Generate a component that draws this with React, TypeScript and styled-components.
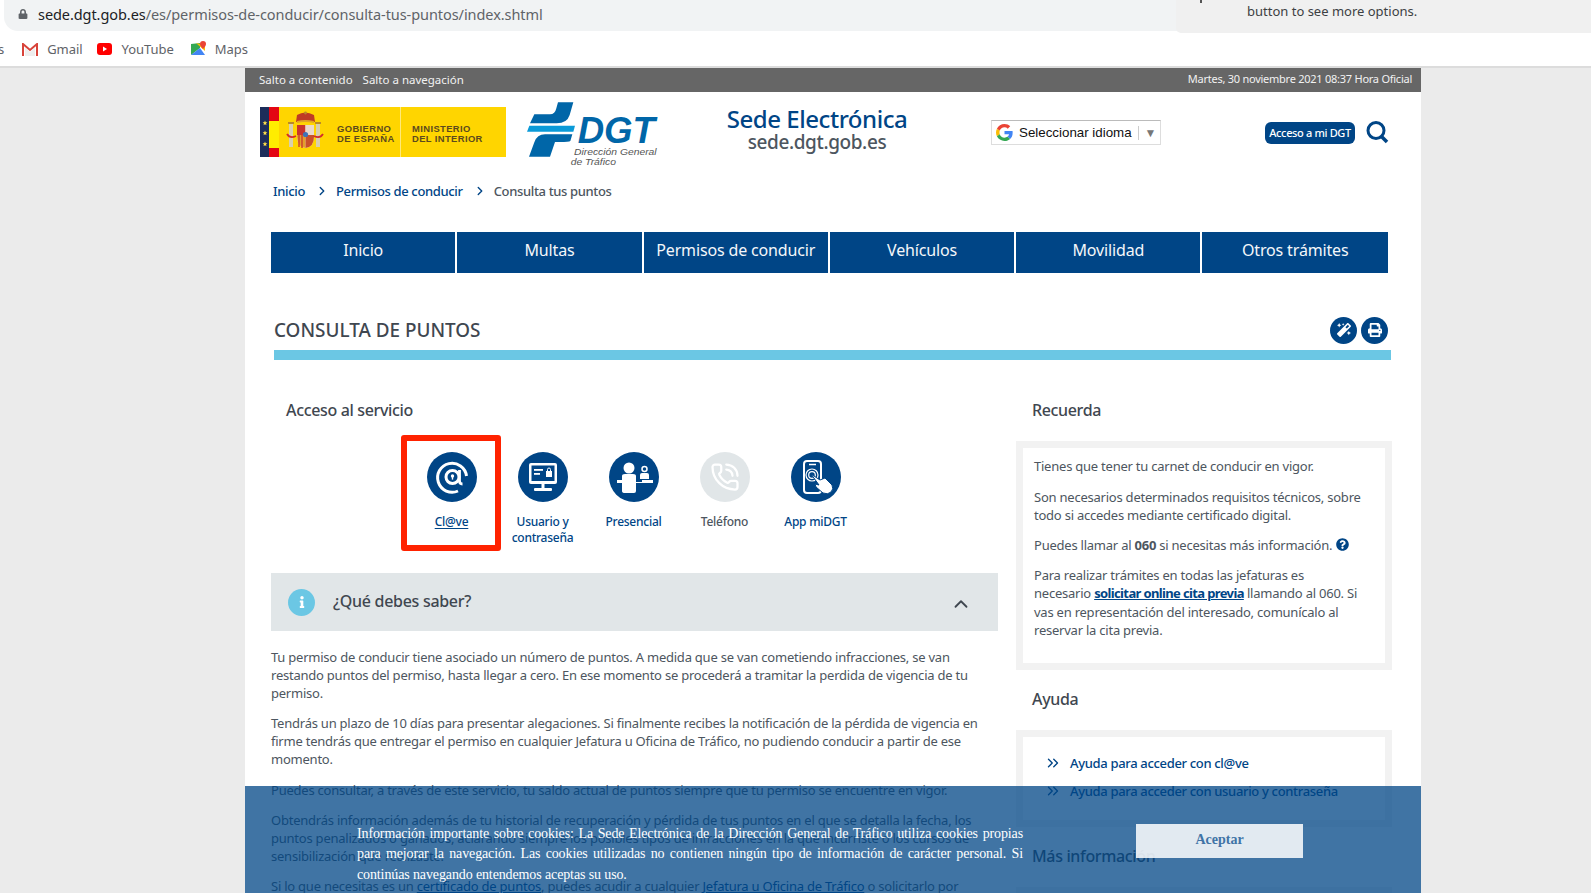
import React, { FC } from "react";
import styled, { createGlobalStyle } from "styled-components";
import { ChevronRight, ChevronsRight, ChevronUp, PhoneCall } from "lucide-react";
import { FaLock, FaMagic, FaPrint, FaQuestionCircle, FaInfo } from "react-icons/fa";

const BLUE = "#004586";
const SKY = "#6bc7e4";
const TEXT = "#4d5660";

const GlobalStyle = createGlobalStyle`
  html, body {
    margin: 0;
    height: 893px;
    overflow: hidden;
    background: #ebebeb;
    font-family: "Noto Sans", "Open Sans", sans-serif;
  }
`;

const Browser = styled.div`
  position: relative;
  background: #fff;
  height: 68px;
  box-shadow: inset 0 -2px 0 #dcdcdc;
`;

const AddressBar = styled.div`
  height: 31px;
  margin-left: 4px;
  background: #f1f3f4;
  border-bottom-left-radius: 14px;
  display: flex;
  align-items: center;
  padding: 0 0 3px 14px;
  box-sizing: border-box;
  font-size: 14.5px;
  letter-spacing: -0.07px;
  color: #5f6368;
  svg {
    color: #5f6368;
    font-size: 10px;
    margin-right: 10px;
  }
  b {
    font-weight: 400;
    color: #202124;
  }
`;

const Popup = styled.div`
  position: absolute;
  left: 1176px;
  right: 0;
  top: 0;
  height: 33px;
  background: #f0f0f0;
  border-bottom-left-radius: 5px;
  font-size: 13px;
  color: #3c4043;
  padding: 2px 0 0 71px;
  box-sizing: border-box;
  &::before {
    content: "";
    position: absolute;
    left: 24px;
    top: 0;
    width: 2px;
    height: 3px;
    background: #555;
  }
`;

const Bookmarks = styled.div`
  display: flex;
  align-items: center;
  height: 35px;
  font-size: 13px;
  letter-spacing: -0.05px;
  color: #5f6368;
  padding-top: 1px;
  box-sizing: border-box;
`;

const Bookmark = styled.span<{ $left: number; $gap: number }>`
  display: flex;
  align-items: center;
  gap: ${({ $gap }) => $gap}px;
  margin-left: ${({ $left }) => $left}px;
`;

const Frame = styled.div`
  padding-left: 245px;
`;

const Page = styled.div`
  position: relative;
  width: 1176px;
  height: 825px;
  overflow: hidden;
  background: #fff;
  color: ${TEXT};
`;

const TopBar = styled.div`
  height: 24px;
  background: #666;
  color: #f2f2f2;
  font-size: 11px;
  letter-spacing: -0.25px;
  display: flex;
  align-items: center;
  justify-content: space-between;
  padding: 0 9px 3px 14px;
  box-sizing: border-box;
`;

const SkipLinks = styled.div`
  display: flex;
  gap: 10px;
  font-size: 11.5px;
  letter-spacing: 0;
  padding-top: 1px;
`;

const Masthead = styled.div`
  height: 89px;
  display: flex;
  align-items: flex-start;
  padding-left: 15px;
`;

const GovLogo = styled.svg`
  margin-top: 15px;
  flex: none;
`;

const DgtLogo = styled.svg`
  margin: 8px 0 0 19px;
  flex: none;
`;

const SiteTitle = styled.div`
  width: 200px;
  margin: 13px 0 0 52px;
  text-align: center;
`;

const SiteName = styled.div`
  font-size: 24px;
  line-height: 28px;
  letter-spacing: -0.45px;
  color: ${BLUE};
  font-weight: 500;
`;

const SiteHost = styled.div`
  font-size: 19px;
  line-height: 19px;
  letter-spacing: -0.4px;
  font-weight: 500;
`;

const Translator = styled.div`
  width: 170px;
  height: 25px;
  margin: 28px 0 0 74px;
  box-sizing: border-box;
  border: 1px solid #ddd;
  border-top-color: #bbb;
  display: flex;
  align-items: center;
  gap: 6px;
  padding-left: 4px;
  font: 13.33px "Liberation Sans", Arial, sans-serif;
  color: #111;
`;

const TranslatorArrow = styled.span`
  border-left: 1px solid #ccc;
  padding-left: 6px;
  color: #777;
  font-size: 12px;
  line-height: 14px;
`;

const AccessButton = styled.a`
  width: 90px;
  height: 22px;
  margin: 30px 0 0 104px;
  padding-bottom: 1px;
  box-sizing: border-box;
  background: ${BLUE};
  border-radius: 6px;
  color: #fff;
  font-size: 11px;
  font-weight: 500;
  letter-spacing: -0.35px;
  display: flex;
  align-items: center;
  justify-content: center;
`;

const SearchIcon = styled.svg`
  margin: 28px 0 0 10px;
`;

const Breadcrumb = styled.nav`
  display: flex;
  align-items: center;
  height: 20px;
  padding-left: 28px;
  font-size: 13px;
  font-weight: 500;
  letter-spacing: -0.35px;
  svg {
    color: ${BLUE};
    margin: 0 7px 0 10px;
  }
`;

const CrumbLink = styled.a`
  color: ${BLUE};
`;

const MainNav = styled.nav`
  display: flex;
  gap: 2px;
  margin: 31px 0 0 26px;
  width: 1117px;
  height: 41px;
`;

const NavItem = styled.a`
  flex: 0 0 184.3px;
  background: ${BLUE};
  color: #f4f7fa;
  font-size: 16px;
  letter-spacing: -0.15px;
  text-align: center;
  line-height: 36px;
  &:last-child {
    flex: 1;
  }
`;

const TitleRow = styled.div`
  display: flex;
  align-items: center;
  justify-content: space-between;
  margin: 40px 0 3px 29px;
  width: 1117px;
  height: 34px;
  padding-right: 3px;
  box-sizing: border-box;
`;

const PageTitle = styled.h1`
  margin: 0 0 1px;
  font-size: 18.9px;
  font-weight: 500;
  color: #3f4750;
`;

const Tools = styled.div`
  display: flex;
  gap: 4px;
`;

const ToolButton = styled.span`
  width: 27px;
  height: 27px;
  border-radius: 50%;
  background: ${BLUE};
  color: #fff;
  font-size: 14px;
  display: flex;
  align-items: center;
  justify-content: center;
`;

const TitleRule = styled.div`
  height: 10px;
  width: 1117px;
  margin-left: 29px;
  background: ${SKY};
`;

const Columns = styled.div`
  display: grid;
  grid-template-columns: 727px 376px;
  column-gap: 18px;
  padding-left: 26px;
`;

const LeftColumn = styled.main``;
const RightColumn = styled.aside``;

const SectionTitle = styled.h2<{ $top: number; $left?: number }>`
  margin: ${({ $top }) => $top}px 0 0 ${({ $left = 16 }) => $left}px;
  font-size: 16px;
  line-height: 20px;
  font-weight: 500;
  letter-spacing: -0.35px;
  color: #3f4750;
`;

const Services = styled.div`
  position: relative;
  display: flex;
  margin-top: 32px;
  padding-left: 135px;
`;

const Service = styled.a<{ $muted?: boolean }>`
  width: 91px;
  display: flex;
  flex-direction: column;
  align-items: center;
  text-align: center;
  font-size: 12px;
  line-height: 16px;
  font-weight: 500;
  letter-spacing: -0.25px;
  color: ${({ $muted }) => ($muted ? TEXT : BLUE)};
  u {
    text-underline-offset: 2px;
  }
`;

const ServiceIcon = styled.span<{ $muted?: boolean }>`
  width: 50px;
  height: 50px;
  border-radius: 50%;
  background: ${({ $muted }) => ($muted ? "#e1e6e8" : BLUE)};
  color: #fff;
  margin-bottom: 12px;
  display: flex;
  align-items: center;
  justify-content: center;
`;

const Highlight = styled.div`
  position: absolute;
  left: 130px;
  top: -17px;
  width: 100px;
  height: 116px;
  box-sizing: border-box;
  border: 6px solid #ff2200;
  border-radius: 3px;
`;

const Accordion = styled.div`
  height: 58px;
  margin-top: 27px;
  background: #e1e6e8;
  display: flex;
  align-items: center;
  padding: 0 26px 0 17px;
  font-size: 16px;
  font-weight: 500;
  letter-spacing: -0.3px;
  color: #3f4750;
`;

const InfoBadge = styled.span`
  width: 27px;
  height: 27px;
  border-radius: 50%;
  background: ${SKY};
  color: #fff;
  font-size: 12px;
  margin-right: 18px;
  display: flex;
  align-items: center;
  justify-content: center;
`;

const AccordionLabel = styled.span`
  flex: 1;
  padding-bottom: 2px;
`;

const AccordionChevron = styled(ChevronUp)`
  margin-top: 3px;
`;

const Copy = styled.div`
  margin-top: 17px;
  font-size: 13px;
  line-height: 18.1px;
  letter-spacing: -0.23px;
  p {
    margin: 0 0 12px;
  }
  a {
    color: ${BLUE};
    text-decoration: underline;
  }
`;

const SideBox = styled.div`
  margin-top: 21px;
  border: 7px solid #f2f2f2;
`;

const SideCopy = styled.div`
  padding: 9.3px 22px 11.7px 11px;
  font-size: 13px;
  line-height: 18.2px;
  letter-spacing: -0.23px;
  p {
    margin: 0 0 12px;
  }
  b {
    font-weight: 700;
  }
  a {
    color: ${BLUE};
    font-weight: 700;
    letter-spacing: -0.63px;
    text-decoration: underline;
  }
  svg {
    color: ${BLUE};
    margin-left: 4px;
    vertical-align: -1px;
  }
`;

const HelpList = styled.div`
  padding: 12px 0 15px 21px;
`;

const HelpLink = styled.a`
  display: flex;
  align-items: center;
  height: 28px;
  gap: 8px;
  color: ${BLUE};
  font-size: 13px;
  font-weight: 500;
  letter-spacing: -0.33px;
`;

const CookieBanner = styled.div`
  position: absolute;
  left: 0;
  right: 0;
  top: 718px;
  height: 107px;
  background: rgba(0, 69, 134, 0.75);
  font-family: "Liberation Serif", "Times New Roman", serif;
  color: #fff;
`;

const CookieText = styled.p`
  position: absolute;
  left: 112px;
  top: 37.8px;
  width: 666px;
  margin: 0;
  font-size: 14px;
  letter-spacing: -0.12px;
  line-height: 20.5px;
  text-align: justify;
`;

const CookieButton = styled.button`
  position: absolute;
  left: 891px;
  top: 38px;
  width: 167px;
  height: 34px;
  border: 0;
  padding: 0 0 2px;
  background: rgba(255, 255, 255, 0.85);
  color: #4073a6;
  font: bold 14px "Liberation Serif", "Times New Roman", serif;
`;

const Star: FC<{ y: number }> = ({ y }) => (
  <path
    transform={`translate(5 ${y})`}
    d="M0-2.400.7-.7 2.400-.7 1 .4 1.500 2.200 0 1.200-1.500 2.200-1 .4-2.400-.7-.7-.7z"
    fill="#ffe14a"
  />
);

const GovernmentLogo: FC = () => (
  <GovLogo width="246" height="50" viewBox="0 0 246 50">
    <rect width="246" height="50" fill="#ffd500" />
    <rect width="9" height="50" fill="#1c2d5a" />
    <rect x="9" width="10" height="14" fill="#e30613" />
    <rect x="9" y="41" width="10" height="9" fill="#e30613" />
    <rect x="9" y="14" width="10" height="27" fill="#ffed00" />
    <Star y={16} />
    <Star y={26} />
    <Star y={37} />
    <rect x="140" width="1" height="50" fill="#ffe97a" />
    {/* escudo */}
    <rect x="29" y="17" width="4" height="23" fill="#d8cfae" />
    <rect x="56" y="17" width="4" height="23" fill="#d8cfae" />
    <rect x="28" y="15" width="6" height="2" fill="#b98a2a" />
    <rect x="55" y="15" width="6" height="2" fill="#b98a2a" />
    <path d="M37 8q8-5 17 0l1 7q-9-2-19 0z" fill="#bf3b25" />
    <path d="M37 14q8-2 17 0v2q-9-2-17 0z" fill="#e0a526" />
    <circle cx="45.500" cy="6" r="1.400" fill="#b98a2a" />
    <path d="M37 18h17v12q0 10-8.500 11Q37 40 37 30z" fill="#fff2d0" />
    <rect x="37" y="18" width="8.500" height="10" fill="#c8352b" />
    <rect x="45.500" y="18" width="8.500" height="10" fill="#ead9cb" />
    <path d="M37 28h8.500v13Q37 40 37 30z" fill="#e2a02a" />
    <path d="M39 28v12M42 28v13" stroke="#c8352b" strokeWidth="1.300" />
    <path d="M45.500 28H54v2q0 10-8.500 11z" fill="#c8502b" />
    <circle cx="45.500" cy="27.500" r="2.600" fill="#3f73b5" />
    <path d="M27 27q3 5 9 2M63 27q-3 5-9 2" stroke="#d22c2c" strokeWidth="1.800" fill="none" />
    <g fontFamily="'Liberation Sans', sans-serif" fontWeight="700" fontSize="9.400" fill="#5c4a1e" letterSpacing=".4">
      <text x="77" y="25">GOBIERNO</text>
      <text x="77" y="35">DE ESPAÑA</text>
      <text x="152" y="25">MINISTERIO</text>
      <text x="152" y="35">DEL INTERIOR</text>
    </g>
  </GovLogo>
);

const TrafficLogo: FC = () => (
  <DgtLogo width="140" height="70" viewBox="810 15 420 210">
    <path d="M838 58H885Q900 58 904 40L909 22H955L944 60Q936 85 905 85H825z" fill="#0066a8" />
    <path d="M823 92H960L955 110H816z" fill="#0a9ad8" />
    <path d="M870 118H952L946 138Q942 141 915 141H900L885 185H822L838 142Q846 118 870 118z" fill="#0066a8" />
    <text x="968" y="143" fontFamily="'Liberation Sans', sans-serif" fontWeight="700" fontStyle="italic" fontSize="112" textLength="232" lengthAdjust="spacingAndGlyphs" fill="#0066a8">DGT</text>
    <g fontFamily="'Liberation Sans', sans-serif" fontStyle="italic" fontSize="28" fill="#555">
      <text x="957" y="179" textLength="248" lengthAdjust="spacingAndGlyphs">Dirección General</text>
      <text x="947" y="211" textLength="136" lengthAdjust="spacingAndGlyphs">de Tráfico</text>
    </g>
  </DgtLogo>
);

const GoogleMark: FC = () => (
  <svg width="17" height="17" viewBox="0 0 48 48">
    <path fill="#ea4335" d="M24 9.500c3.500 0 6.700 1.200 9.200 3.600l6.900-6.900C35.900 2.400 30.500 0 24 0 14.600 0 6.500 5.400 2.600 13.200l8 6.200C12.400 13.700 17.700 9.500 24 9.500z" />
    <path fill="#4285f4" d="M47 24.500c0-1.600-.1-3.100-.4-4.500H24v9h12.900c-.6 3-2.200 5.500-4.800 7.200l7.700 6C44.400 38.500 47 32.100 47 24.500z" />
    <path fill="#fbbc05" d="M10.600 28.600C10.100 27.200 9.800 25.600 9.800 24s.3-3.200.8-4.600l-8-6.200C1 16.400 0 20.100 0 24s1 7.600 2.600 10.800z" />
    <path fill="#34a853" d="M24 48c6.500 0 11.900-2.100 15.900-5.800l-7.700-6c-2.200 1.400-4.900 2.300-8.200 2.300-6.300 0-11.600-4.200-13.400-9.900l-8 6.200C6.500 42.600 14.600 48 24 48z" />
  </svg>
);

const ClaveIcon: FC = () => (
  <svg width="50" height="50" viewBox="0 0 50 50" fill="none" stroke="currentColor">
    <path d="M31 39A14.500 14.500 0 1 1 39.500 24" strokeWidth="3" />
    <circle cx="25.500" cy="25" r="6.500" strokeWidth="3" />
    <path d="M32.500 18V29q0 3 3 3" strokeWidth="2.800" />
    <circle cx="25.500" cy="24" r="1.700" fill="currentColor" stroke="none" />
    <rect x="24.800" y="24" width="1.400" height="3.600" fill="currentColor" stroke="none" />
  </svg>
);

const DesktopIcon: FC = () => (
  <svg width="50" height="50" viewBox="0 0 50 50">
    <rect x="11" y="11" width="28" height="21" rx="2" fill="currentColor" />
    <rect x="13.500" y="13.500" width="23" height="15.500" fill={BLUE} />
    <rect x="16" y="17" width="9" height="1.800" fill="currentColor" />
    <rect x="16" y="21" width="6" height="1.800" fill="currentColor" />
    <rect x="28" y="19" width="6" height="6" fill="currentColor" />
    <path d="M29.500 19v-1.500a1.500 1.500 0 0 1 3 0V19" stroke="currentColor" fill="none" />
    <rect x="23.500" y="32" width="3" height="4" fill="currentColor" />
    <rect x="16" y="36" width="18" height="3" rx="1" fill="currentColor" />
  </svg>
);

const DeskIcon: FC = () => (
  <svg width="50" height="50" viewBox="0 0 50 50" fill="currentColor">
    <circle cx="20" cy="16" r="5.500" />
    <path d="M13 24q0-2 3-2h8q3 0 3 2v6h6v-2h11v3H27v8q0 2-2 2h-9q-3 0-3-2v-8H8v-3h5z" />
    <circle cx="35.500" cy="17" r="2.500" fill="none" stroke="currentColor" strokeWidth="1.500" />
    <path d="M31 27v-4q0-2 2-2h5q2 0 2 2v4z" />
  </svg>
);

const AppIcon: FC = () => (
  <svg width="50" height="50" viewBox="0 0 50 50" fill="none" stroke="currentColor">
    <rect x="13" y="9" width="17" height="32" rx="3" strokeWidth="2" />
    <path d="M18 12.500h7" strokeWidth="1.500" />
    <circle cx="21" cy="23" r="6" strokeWidth="1.200" />
    <circle cx="21" cy="23" r="3.300" strokeWidth="1.200" />
    <path d="M20 22l9 6 5-2 7 7q2 4-1 7-3 3-8 1l-7-6-1-3 4 1z" fill="currentColor" stroke={BLUE} strokeWidth="1" />
  </svg>
);

const services = [
  { label: "Usuario y contraseña", icon: <DesktopIcon /> },
  { label: "Presencial", icon: <DeskIcon /> },
  { label: "Teléfono", icon: <PhoneCall size={30} strokeWidth={1.800} />, muted: true },
  { label: "App miDGT", icon: <AppIcon /> },
];

const sections = ["Inicio", "Multas", "Permisos de conducir", "Vehículos", "Movilidad", "Otros trámites"];

export default function App() {
  return (
    <>
      <GlobalStyle />
      <Browser>
        <AddressBar>
          <FaLock />
          <span>
            <b>sede.dgt.gob.es</b>/es/permisos-de-conducir/consulta-tus-puntos/index.shtml
          </span>
        </AddressBar>
        <Popup>button to see more options.</Popup>
        <Bookmarks>
          <Bookmark $left={-2} $gap={0}>s</Bookmark>
          <Bookmark $left={18} $gap={9}>
            <svg width="16" height="13" viewBox="0 0 16 13">
              <path d="M1 13V1l7 6 7-6v12" fill="none" stroke="#d8433a" strokeWidth="2" />
              <path d="M3 13V5l5 4 5-4v8" fill="#eee" />
            </svg>
            Gmail
          </Bookmark>
          <Bookmark $left={14} $gap={10}>
            <svg width="15" height="12" viewBox="0 0 15 12">
              <rect width="15" height="12" rx="3" fill="#f00" />
              <path d="M6 3.500v5l4-2.500z" fill="#fff" />
            </svg>
            YouTube
          </Bookmark>
          <Bookmark $left={17} $gap={8}>
            <svg width="16" height="16" viewBox="0 0 16 16">
              <path d="M0 3l9-1v5L0 14z" fill="#34a853" />
              <path d="M0 14l9-7 5 7z" fill="#4285f4" />
              <path d="M5 2l9 8V4z" fill="#fbbc05" />
              <path d="M12 0a3 3 0 0 1 3 3c0 2-3 5-3 5s-3-3-3-5a3 3 0 0 1 3-3z" fill="#ea4335" />
            </svg>
            Maps
          </Bookmark>
        </Bookmarks>
      </Browser>
      <Frame>
        <Page>
          <TopBar>
            <SkipLinks>
              <span>Salto a contenido</span>
              <span>Salto a navegación</span>
            </SkipLinks>
            <span>Martes, 30 noviembre 2021 08:37 Hora Oficial</span>
          </TopBar>
          <Masthead>
            <GovernmentLogo />
            <TrafficLogo />
            <SiteTitle>
              <SiteName>Sede Electrónica</SiteName>
              <SiteHost>sede.dgt.gob.es</SiteHost>
            </SiteTitle>
            <Translator>
              <GoogleMark />
              Seleccionar idioma
              <TranslatorArrow>▼</TranslatorArrow>
            </Translator>
            <AccessButton>Acceso a mi DGT</AccessButton>
            <SearchIcon width="24" height="24" viewBox="0 0 24 24" fill="none" stroke={BLUE}>
              <circle cx="11" cy="10.500" r="8" strokeWidth="3" />
              <path d="M16 16l6 6" strokeWidth="3.500" />
            </SearchIcon>
          </Masthead>
          <Breadcrumb>
            <CrumbLink>Inicio</CrumbLink>
            <ChevronRight size={14} strokeWidth={2.400} />
            <CrumbLink>Permisos de conducir</CrumbLink>
            <ChevronRight size={14} strokeWidth={2.400} />
            <span>Consulta tus puntos</span>
          </Breadcrumb>
          <MainNav>
            {sections.map((s) => (
              <NavItem key={s}>{s}</NavItem>
            ))}
          </MainNav>
          <TitleRow>
            <PageTitle>CONSULTA DE PUNTOS</PageTitle>
            <Tools>
              <ToolButton>
                <FaMagic />
              </ToolButton>
              <ToolButton>
                <FaPrint />
              </ToolButton>
            </Tools>
          </TitleRow>
          <TitleRule />
          <Columns>
            <LeftColumn>
              <SectionTitle $top={40} $left={15}>Acceso al servicio</SectionTitle>
              <Services>
                <Service>
                  <ServiceIcon>
                    <ClaveIcon />
                  </ServiceIcon>
                  <u>Cl@ve</u>
                </Service>
                {services.map((s) => (
                  <Service key={s.label} $muted={s.muted}>
                    <ServiceIcon $muted={s.muted}>{s.icon}</ServiceIcon>
                    {s.label}
                  </Service>
                ))}
                <Highlight />
              </Services>
              <Accordion>
                <InfoBadge>
                  <FaInfo />
                </InfoBadge>
                <AccordionLabel>¿Qué debes saber?</AccordionLabel>
                <AccordionChevron size={22} strokeWidth={2} color="#3f4750" />
              </Accordion>
              <Copy>
                <p>
                  Tu permiso de conducir tiene asociado un número de puntos. A medida que se van cometiendo infracciones, se van restando puntos del permiso, hasta llegar a cero. En ese momento se procederá a tramitar la perdida de vigencia de tu permiso.
                </p>
                <p>
                  Tendrás un plazo de 10 días para presentar alegaciones. Si finalmente recibes la notificación de la pérdida de vigencia en firme tendrás que entregar el permiso en cualquier Jefatura u Oficina de Tráfico, no pudiendo conducir a partir de ese momento.
                </p>
                <p>Puedes consultar, a través de este servicio, tu saldo actual de puntos siempre que tu permiso se encuentre en vigor.</p>
                <p>
                  Obtendrás información además de tu historial de recuperación y pérdida de tus puntos en el que se detalla la fecha, los puntos penalizados o ganados, aclarando siempre los posibles tipos de infracciones en la que incurriste o los cursos de sensibilización que realizaste.
                </p>
                <p>
                  Si lo que necesitas es un <a>certificado de puntos</a>, puedes acudir a cualquier <a>Jefatura u Oficina de Tráfico</a> o solicitarlo por
                </p>
              </Copy>
            </LeftColumn>
            <RightColumn>
              <SectionTitle $top={40}>Recuerda</SectionTitle>
              <SideBox>
                <SideCopy>
                  <p>Tienes que tener tu carnet de conducir en vigor.</p>
                  <p>Son necesarios determinados requisitos técnicos, sobre todo si accedes mediante certificado digital.</p>
                  <p>
                    Puedes llamar al <b>060</b> si necesitas más información.
                    <FaQuestionCircle size={13} />
                  </p>
                  <p>
                    Para realizar trámites en todas las jefaturas es necesario <a>solicitar online cita previa</a> llamando al 060. Si vas en representación del interesado, comunícalo al reservar la cita previa.
                  </p>
                </SideCopy>
              </SideBox>
              <SectionTitle $top={19}>Ayuda</SectionTitle>
              <SideBox>
                <HelpList>
                  <HelpLink>
                    <ChevronsRight size={18} strokeWidth={1.800} />
                    Ayuda para acceder con cl@ve
                  </HelpLink>
                  <HelpLink>
                    <ChevronsRight size={18} strokeWidth={1.800} />
                    Ayuda para acceder con usuario y contraseña
                  </HelpLink>
                </HelpList>
              </SideBox>
              <SectionTitle $top={19}>Más información</SectionTitle>
              <SideBox>
                <HelpList />
              </SideBox>
            </RightColumn>
          </Columns>
          <CookieBanner>
            <CookieText>
              Información importante sobre cookies: La Sede Electrónica de la Dirección General de Tráfico utiliza cookies propias para mejorar la navegación. Las cookies utilizadas no contienen ningún tipo de información de carácter personal. Si continúas navegando entendemos aceptas su uso.
            </CookieText>
            <CookieButton>Aceptar</CookieButton>
          </CookieBanner>
        </Page>
      </Frame>
    </>
  );
}
